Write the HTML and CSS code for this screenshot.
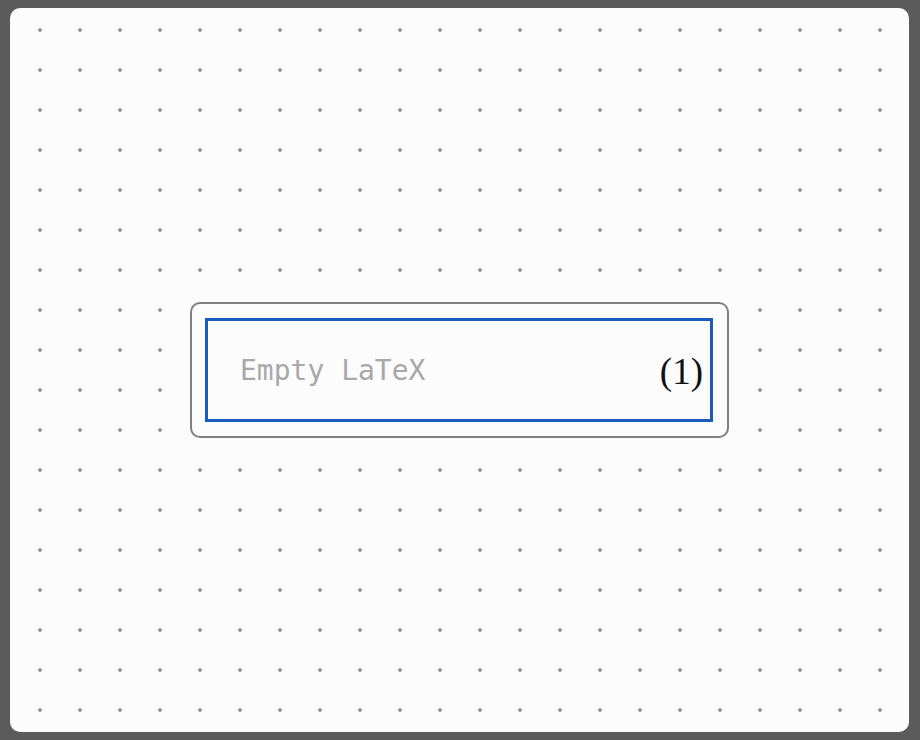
FILE: index.html
```html
<!DOCTYPE html>
<html>
<head>
<meta charset="utf-8">
<link rel="stylesheet" href="styles.css">
</head>
<body>
<div class="panel">
  <div class="frame">
    <div class="editor">
      <span class="placeholder">Empty LaTeX</span>
      <span class="eqno">(1)</span>
    </div>
  </div>
</div>
</body>
</html>
```
FILE: styles.css
```css
html, body {
  margin: 0;
  padding: 0;
}
body {
  background: #5b5b5b;
  width: 920px;
  height: 740px;
  padding-top: 8px;
  box-sizing: border-box;
}
.panel {
  margin-left: 10px;
  width: 899px;
  height: 724px;
  border-radius: 10px;
  background-color: #fcfcfc;
  background-image: radial-gradient(circle at 20px 20px, #939393 0, #939393 1.5px, rgba(147,147,147,0) 2.1px);
  background-size: 40px 40px;
  background-position: 10px 2px;
  display: flex;
  align-items: center;
  justify-content: center;
}
.frame {
  width: 539px;
  height: 136px;
  box-sizing: border-box;
  border: 2px solid #808080;
  border-radius: 10px;
  background: #fcfcfc;
  padding: 14px 14px 14px 13px;
  margin-left: 0;
}
.editor {
  height: 100%;
  box-sizing: border-box;
  border: 3px solid #1a5cbd;
  display: flex;
  align-items: center;
  justify-content: space-between;
  padding: 0 7px 0 32px;
}
.placeholder {
  font-family: "DejaVu Sans Mono", monospace;
  font-size: 28px;
  color: #a8a8a8;
  margin-top: 1px;
}
.eqno {
  font-family: "Liberation Serif", serif;
  font-size: 37px;
  color: #111;
  margin-top: 2px;
}
```
